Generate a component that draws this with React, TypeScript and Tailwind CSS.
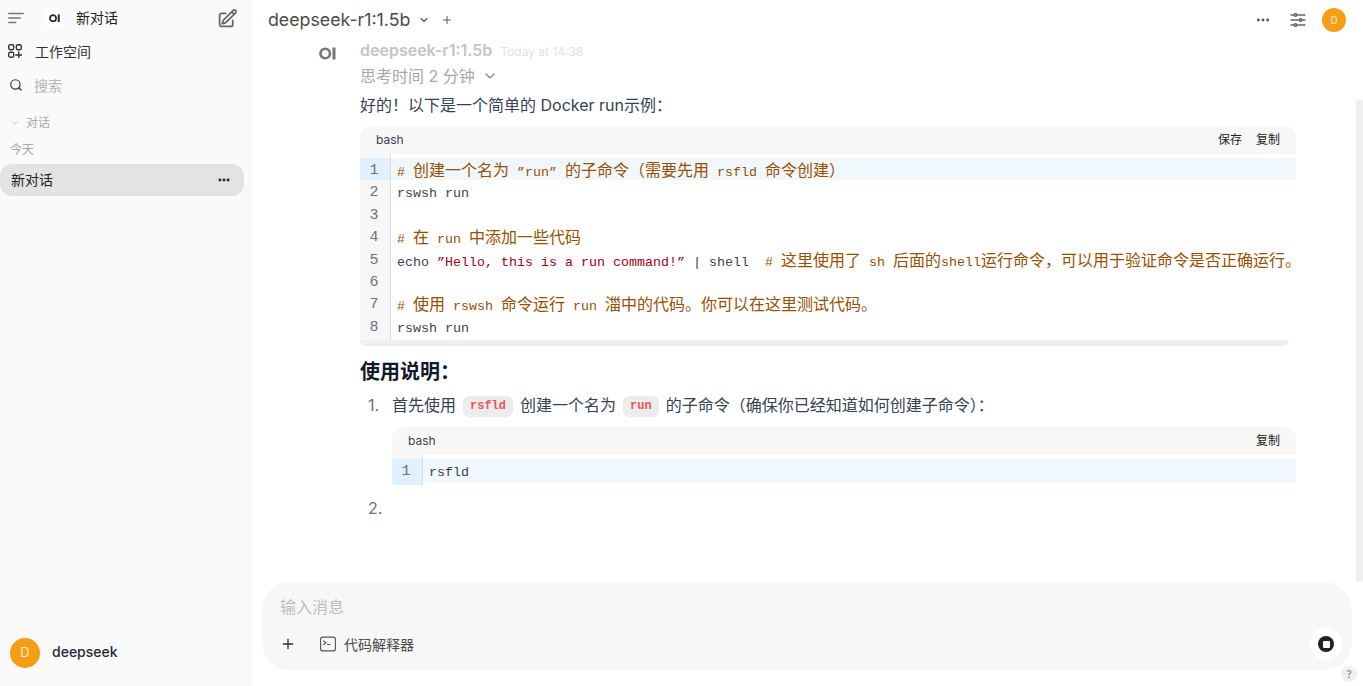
import React from "react";
import { ChevronDown, Plus, Search, Ellipsis } from "lucide-react";
import { HiOutlinePencilSquare, HiOutlineAdjustmentsHorizontal } from "react-icons/hi2";

const comment = "text-[#994f00]";
const plain = "text-[#3a4252]";
const str = "text-[#a3000f]";

const lines: { parts: { t: string; c: string }[] }[] = [
  { parts: [{ t: "# 创建一个名为 ”run” 的子命令（需要先用 rsfld 命令创建）", c: comment }] },
  { parts: [{ t: "rswsh run", c: plain }] },
  { parts: [] },
  { parts: [{ t: "# 在 run 中添加一些代码", c: comment }] },
  {
    parts: [
      { t: "echo ", c: plain },
      { t: "”Hello, this is a run command!”", c: str },
      { t: " | shell  ", c: plain },
      { t: "# 这里使用了 sh 后面的shell运行命令，可以用于验证命令是否正确运行。", c: comment },
    ],
  },
  { parts: [] },
  { parts: [{ t: "# 使用 rswsh 命令运行 run 湽中的代码。你可以在这里测试代码。", c: comment }] },
  { parts: [{ t: "rswsh run", c: plain }] },
];

// latin is 8px per char and cjk 16px per char in the code blocks, so split the runs
function CodeText({ text }: { text: string }) {
  const runs = text.match(/[\x00-\x7f”]+|[^\x00-\x7f”]+/g) ?? [];
  return (
    <>
      {runs.map((r, i) =>
        /^[\x00-\x7f”]/.test(r) ? (
          <span key={i} className="font-['Liberation_Mono',monospace] text-[13.33px]">
            {r}
          </span>
        ) : (
          <span key={i} className="font-['Noto_Sans_CJK_SC',sans-serif] text-[16px]">
            {r}
          </span>
        )
      )}
    </>
  );
}

function CodeRow({ n, active, children }: { n: number; active?: boolean; children?: React.ReactNode }) {
  return (
    <div className={`flex h-[22.4px] ${active ? "bg-[#f0f8fe]" : ""}`}>
      <div
        className={`w-[31px] shrink-0 border-r border-[#dddddd] text-center text-[#6b7280] font-['Liberation_Mono',monospace] text-[15px] leading-[22.4px] pt-[2px] pr-[2px] ${
          active ? "bg-[#e0f0fc]" : "bg-[#f7f7f7]"
        }`}
      >
        {n}
      </div>
      <div className="pl-[6px] leading-[22.4px] whitespace-pre">{children}</div>
    </div>
  );
}

function CodeHeader({ save }: { save?: boolean }) {
  return (
    <div className="h-7 bg-[#f7f7f7] rounded-t-xl flex items-center justify-between pl-4 pr-4 text-[12px] text-[#374151]">
      <span>bash</span>
      <div className="flex gap-[14px] text-[#222]">
        {save && <span>保存</span>}
        <span>复制</span>
      </div>
    </div>
  );
}

function InlineCode({ children }: { children: React.ReactNode }) {
  return (
    <code className="mx-[7px] inline-flex h-[21px] items-center rounded-md bg-[#ececec] px-[7px] align-[2px] font-['Liberation_Mono',monospace] text-[12px] font-bold text-[#eb5757]">
      {children}
    </code>
  );
}

function OiLogo({ className }: { className: string }) {
  return (
    <svg viewBox="0 0 17 13" className={className} fill="none" stroke="currentColor">
      <circle cx="6.2" cy="6.5" r="4.8" strokeWidth="2.6" />
      <path d="M15 0.5v12" strokeWidth="3" />
    </svg>
  );
}

function Sidebar() {
  return (
    <aside className="w-[252px] shrink-0 bg-[#fafafa] flex flex-col text-[14px] text-[#1f2937]">
      <div className="h-9 flex items-center pl-2 pr-[14px]">
        <svg viewBox="0 0 16 12" className="w-4 h-3 text-[#777]" fill="none" stroke="currentColor" strokeWidth="1.4" strokeLinecap="round">
          <path d="M0.8 1.5h14.4M0.8 6h11.5M0.8 10.5h7" />
        </svg>
        <div className="ml-[20px] w-5 h-5 rounded-full bg-white flex items-center justify-center">
          <OiLogo className="w-[11px] h-[8.5px] text-[#222]" />
        </div>
        <span className="ml-3 pb-[1px] text-[#222]">新对话</span>
        <HiOutlinePencilSquare className="ml-auto w-[21px] h-[21px] stroke-2 text-[#666]" />
      </div>
      <div className="-mt-[2px] h-[34px] flex items-center pl-2">
        <svg viewBox="0 0 14 14" className="w-[14px] h-[14px] text-[#333]" fill="none" stroke="currentColor" strokeWidth="1.4">
          <rect x="0.7" y="0.7" width="5" height="5" rx="1.6" />
          <rect x="8.3" y="0.7" width="5" height="5" rx="1.6" />
          <rect x="0.7" y="8.3" width="5" height="5" rx="1.6" />
          <path d="M10.8 8v6M7.8 11h6" strokeLinecap="round" />
        </svg>
        <span className="ml-[13px] text-[#333]">工作空间</span>
      </div>
      <div className="h-[34px] flex items-center pl-[9px]">
        <Search className="w-[14px] h-[14px] text-[#333]" strokeWidth={2} />
        <span className="ml-[11px] text-[#b5b5b5]">搜索</span>
      </div>
      <div className="mt-[11px] h-5 flex items-center pl-[10px] text-[12px] text-[#a8a8a8]">
        <ChevronDown className="w-[10px] h-[10px] text-[#bbb]" />
        <span className="ml-[6px]">对话</span>
      </div>
      <div className="mt-[7px] h-5 flex items-center pl-[10px] text-[12px] text-[#a8a8a8]">今天</div>
      <div className="mt-[4px] mr-2 h-8 rounded-xl bg-[#e3e3e3] flex items-center pl-[11px] pr-[13px] text-[#222]">
        <span className="pb-[2px]">新对话</span>
        <Ellipsis className="ml-auto w-[14px] h-[14px] text-[#222]" strokeWidth={3} />
      </div>
      <div className="mt-auto mb-[18px] pl-[10px] flex items-center gap-3">
        <div className="w-[30px] h-[30px] rounded-full bg-[#f59e14] text-white/80 flex items-center justify-center text-[13px]">D</div>
        <span className="pb-[3px] text-[#1f2937] font-medium text-[14px]">deepseek</span>
      </div>
    </aside>
  );
}

function TopBar() {
  return (
    <div className="h-10 shrink-0 flex items-center pl-4 pr-[17px]">
      <span className="text-[17.75px] text-[#4b4b4b]">deepseek-r1:1.5b</span>
      <ChevronDown className="ml-[8px] w-[12px] h-[12px] text-[#555]" strokeWidth={2.2} />
      <Plus className="ml-[11px] w-[12px] h-[12px] text-[#555]" strokeWidth={2} />
      <Ellipsis className="ml-auto w-[16px] h-[16px] text-[#555]" strokeWidth={2.4} />
      <HiOutlineAdjustmentsHorizontal className="ml-[17px] w-[20px] h-[20px] stroke-2 text-[#666]" />
      <div className="ml-[14px] w-6 h-6 rounded-full bg-[#f59e14] text-white/80 flex items-center justify-center text-[10px]">D</div>
    </div>
  );
}

function Message() {
  return (
    <div className="flex-1 min-h-0 overflow-hidden pl-[67px] pr-[67px] flex">
      <div className="w-[41px] shrink-0 pt-[7px]">
        <OiLogo className="w-[17px] h-[13px] text-[#777]" />
      </div>
      <div className="flex-1 min-w-0">
        <div className="h-5 flex items-baseline -mt-[2px]">
          <span className="font-semibold text-[16px] text-[#c4c4c4]">deepseek-r1:1.5b</span>
          <span className="ml-2 text-[12px] text-[#e2e2e2]">Today at 14:38</span>
        </div>
        <div className="mt-[6px] h-6 flex items-center text-[16px] text-[#a8a8a8]">
          思考时间 2 分钟
          <ChevronDown className="ml-[7px] w-4 h-4 text-[#888]" />
        </div>
        <p className="mt-[5px] h-6 text-[16px] leading-6 text-[#374151]">好的！以下是一个简单的 Docker run示例：</p>

        <div className="mt-[9px]">
          <CodeHeader save />
          <div className="h-[4px] w-[31px] bg-[#f7f7f7] border-r border-[#dddddd]" />
          {lines.map((l, i) => (
            <CodeRow key={i} n={i + 1} active={i === 0}>
              {l.parts.map((p, j) => (
                <span key={j} className={p.c}>
                  <CodeText text={p.t} />
                </span>
              ))}
            </CodeRow>
          ))}
          <div className="h-[3px] w-[31px] bg-[#f7f7f7] border-r border-[#dddddd]" />
          <div className="mr-[7px] h-[6px] rounded-b-md bg-[#f0f0f0]" />
        </div>

        <h3 className="mt-[12px] h-7 text-[20px] leading-7 font-bold text-[#111827]">使用说明：</h3>

        <div className="mt-[7px] flex text-[16px] text-[#374151]">
          <span className="w-8 pl-2 text-[#6b7280]">1.</span>
          <div className="flex-1 min-w-0">
            <div className="h-6 leading-6">
              首先使用
              <InlineCode>rsfld</InlineCode>
              创建一个名为
              <InlineCode>run</InlineCode>
              的子命令（确保你已经知道如何创建子命令）：
            </div>
            <div className="mt-[10px]">
              <CodeHeader />
              <div className="h-[4px] w-[31px] bg-[#f7f7f7] border-r border-[#dddddd]" />
              <CodeRow n={1} active>
                <span className={plain}>
                  <CodeText text="rsfld" />
                </span>
              </CodeRow>
              <div className="h-[3px] w-[31px] rounded-bl-md bg-[#e0f0fc] border-r border-[#dddddd]" />
            </div>
          </div>
        </div>
        <div className="mt-[11px] pl-2 text-[16px] text-[#6b7280]">2.</div>
      </div>
    </div>
  );
}

function InputBox() {
  return (
    <div className="shrink-0 pl-[10px] pr-[11px] pb-4">
      <div className="h-[88px] rounded-[28px] bg-[#f7f7f7] flex flex-col pl-[18px] pr-[10px]">
        <div className="mt-[15px] h-5 text-[16px] leading-5 text-[#b9bec5]">输入消息</div>
        <div className="mt-[11px] flex items-center h-8">
          <Plus className="w-4 h-4 text-[#333]" strokeWidth={2} />
          <svg viewBox="0 0 16 16" className="ml-[24px] w-4 h-4 text-[#555]" fill="none" stroke="currentColor" strokeWidth="1.1">
            <rect x="0.6" y="1.1" width="14.8" height="13.8" rx="2" />
            <path d="M3.5 5l2.5 1.8-2.5 1.8M7.5 8.5h2.5" strokeLinecap="round" strokeLinejoin="round" />
          </svg>
          <span className="ml-2 text-[14px] text-[#4b4b4b]">代码解释器</span>
          <div className="ml-auto w-8 h-8 rounded-full bg-white flex items-center justify-center">
            <div className="w-4 h-4 rounded-full bg-[#222] flex items-center justify-center">
              <div className="w-[7px] h-[7px] rounded-[1px] bg-white" />
            </div>
          </div>
        </div>
      </div>
    </div>
  );
}

export default function App() {
  return (
    <div className="relative h-screen w-full overflow-hidden flex bg-white font-['Inter','Noto_Sans_CJK_SC',sans-serif]">
      <Sidebar />
      <main className="flex-1 min-w-0 flex flex-col">
        <TopBar />
        <Message />
        <InputBox />
      </main>
      {/* scrollbar thumb */}
      <div className="absolute right-0 top-[99px] h-[483px] w-[7px] rounded-sm bg-[#efefef]" />
      {/* help button */}
      <div className="absolute right-[6px] bottom-[4px] w-4 h-4 rounded-full bg-[#f0f0f0] flex items-center justify-center text-[10px] text-[#777]">?</div>
    </div>
  );
}
